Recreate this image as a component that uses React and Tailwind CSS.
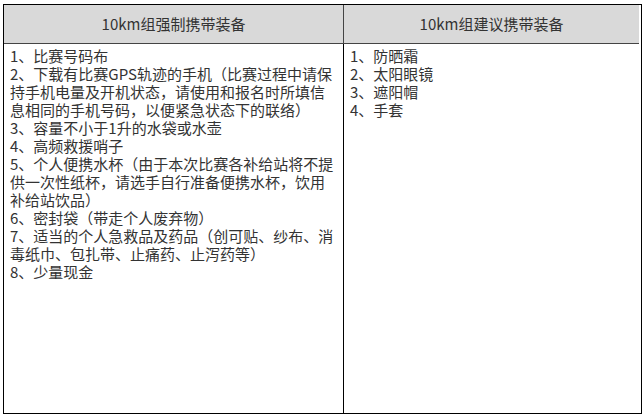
import React from 'react';

const leftLines = [
  '1、比赛号码布',
  '2、下载有比赛GPS轨迹的手机（比赛过程中请保',
  '持手机电量及开机状态，请使用和报名时所填信',
  '息相同的手机号码，以便紧急状态下的联络）',
  '3、容量不小于1升的水袋或水壶',
  '4、高频救援哨子',
  '5、个人便携水杯（由于本次比赛各补给站将不提',
  '供一次性纸杯，请选手自行准备便携水杯，饮用',
  '补给站饮品）',
  '6、密封袋（带走个人废弃物）',
  '7、适当的个人急救品及药品（创可贴、纱布、消',
  '毒纸巾、包扎带、止痛药、止泻药等）',
  '8、少量现金',
];

const rightLines = ['1、防晒霜', '2、太阳眼镜', '3、遮阳帽', '4、手套'];

const font = { fontFamily: '"Microsoft YaHei", "Noto Sans CJK SC", "Noto Sans", sans-serif' };

export default function App() {
  return (
    <div className="w-[642px] h-[419px] bg-white pl-[3px] pt-[4px]" style={font}>
      <div className="grid grid-cols-[340px_295px] border border-black text-[#333] text-[15px]">
        {/* Header */}
        <div className="h-[39px] bg-[#d9d9d9] border-r border-b border-[#444] flex items-center justify-center">
          10km组强制携带装备
        </div>
        <div className="h-[39px] bg-[#d9d9d9] border-b border-[#444] flex items-center justify-center">
          10km组建议携带装备
        </div>

        {/* Body */}
        <div className="h-[369px] border-r border-black pl-[6px] pt-[3px] leading-[18px]">
          {leftLines.map((line, i) => (
            <div key={i} className="whitespace-nowrap">{line}</div>
          ))}
        </div>
        <div className="h-[369px] pl-[6px] pt-[3px] leading-[18px]">
          {rightLines.map((line, i) => (
            <div key={i} className="whitespace-nowrap">{line}</div>
          ))}
        </div>
      </div>
    </div>
  );
}
